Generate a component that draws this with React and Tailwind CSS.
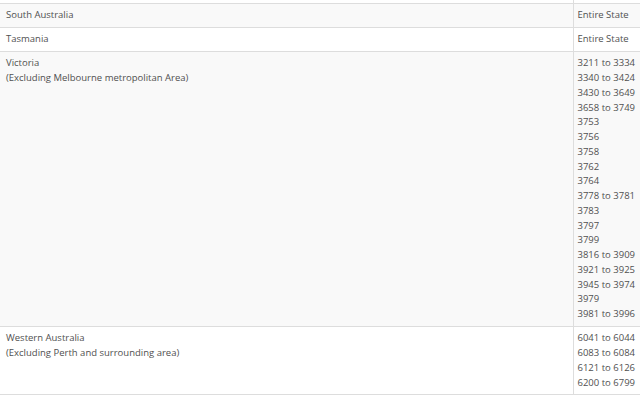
const rows = [
  { area: ["South Australia"], codes: ["Entire State"], shaded: true },
  { area: ["Tasmania"], codes: ["Entire State"], shaded: false },
  {
    area: ["Victoria", "(Excluding Melbourne metropolitan Area)"],
    codes: [
      "3211 to 3334",
      "3340 to 3424",
      "3430 to 3649",
      "3658 to 3749",
      "3753",
      "3756",
      "3758",
      "3762",
      "3764",
      "3778 to 3781",
      "3783",
      "3797",
      "3799",
      "3816 to 3909",
      "3921 to 3925",
      "3945 to 3974",
      "3979",
      "3981 to 3996",
    ],
    shaded: true,
  },
  {
    area: ["Western Australia", "(Excluding Perth and surrounding area)"],
    codes: ["6041 to 6044", "6083 to 6084", "6121 to 6126", "6200 to 6799"],
    shaded: false,
  },
];

export default function App() {
  return (
    <div
      className="w-[640px] h-[397px] bg-white overflow-hidden text-[#505050] text-[9.5px] leading-[14.76px]"
      style={{ fontFamily: '"Open Sans", "Liberation Sans", sans-serif' }}
    >
      <table className="w-full table-fixed">
        <colgroup>
          <col className="w-[573px]" />
          <col />
        </colgroup>
        <tbody>
          {/* tail of the row above */}
          <tr className="h-[3px]">
            <td className="border-r border-[#ddd] p-0"></td>
            <td className="p-0"></td>
          </tr>
          {rows.map((row) => (
            <tr
              key={row.area[0]}
              className={`border-t border-b border-[#ddd] align-top ${
                row.shaded ? "bg-[#f9f9f9]" : "bg-white"
              }`}
            >
              <td className="border-r border-[#ddd] pl-[6px] pr-1 pt-[4.4px] pb-[4px]">
                {row.area.map((line) => (
                  <div key={line}>{line}</div>
                ))}
              </td>
              <td className="pl-[4px] pr-1 pt-[4.4px] pb-[4px]">
                {row.codes.map((code) => (
                  <div key={code} className="whitespace-nowrap">
                    {code}
                  </div>
                ))}
              </td>
            </tr>
          ))}
        </tbody>
      </table>
    </div>
  );
}
